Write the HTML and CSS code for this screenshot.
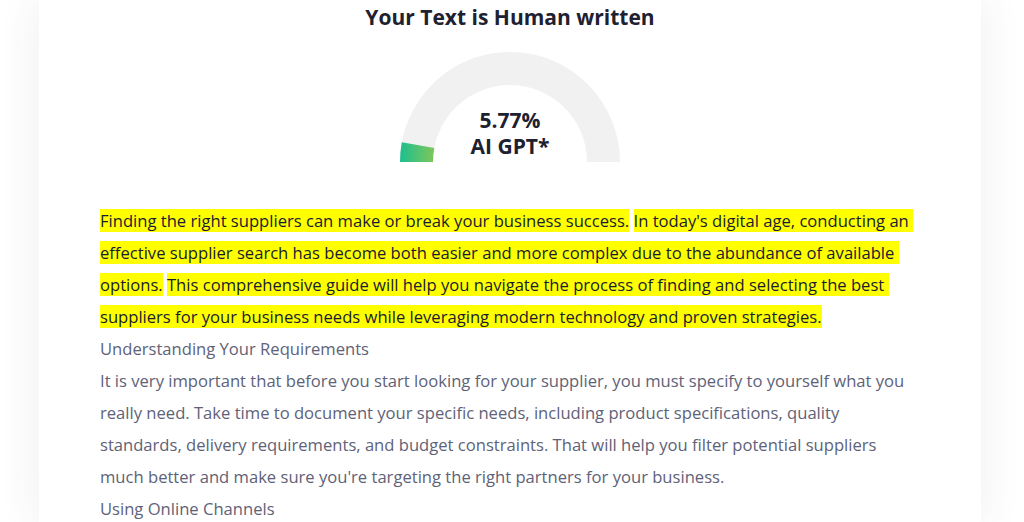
FILE: index.html
```html
<!DOCTYPE html>
<html lang="en">
<head>
    <meta charset="UTF-8">
    <title>AI Detector Result</title>
    <link rel="stylesheet" href="styles.css">
</head>
<body>
    <div class="page">
        <div class="card">
            <h2 class="result-title">Your Text is Human written</h2>

            <div class="gauge">
                <svg width="222" height="112" viewBox="0 0 222 112">
                    <defs>
                        <linearGradient id="gaugeFill" x1="0" y1="0" x2="1" y2="0">
                            <stop offset="0" stop-color="#1dbf8e"/>
                            <stop offset="1" stop-color="#7fc65a"/>
                        </linearGradient>
                    </defs>
                    <path d="M 1 111 A 110 110 0 0 1 221 111 L 188 111 A 77 77 0 0 0 34 111 Z" fill="#f1f1f2"/>
                    <path d="M 1 111 A 110 110 0 0 1 2.8 91.2 L 35.3 97.1 A 77 77 0 0 0 34 111 Z" fill="url(#gaugeFill)"/>
                </svg>
                <div class="gauge-label">
                    <div>5.77%</div>
                    <div>AI GPT*</div>
                </div>
            </div>

            <div class="result-text">
                <p class="marked"><span class="hl">Finding the right suppliers can make or break your business success.</span> <span class="hl">In today's digital age, conducting an effective supplier search has become both easier and more complex due to the abundance of available options.</span> <span class="hl">This comprehensive guide will help you navigate the process of finding and selecting the best suppliers for your business needs while leveraging modern technology and proven strategies.</span></p>
                <p class="plain">Understanding Your Requirements</p>
                <p class="plain">It is very important that before you start looking for your supplier, you must specify to yourself what you really need. Take time to document your specific needs, including product specifications, quality standards, delivery requirements, and budget constraints. That will help you filter potential suppliers much better and make sure you're targeting the right partners for your business.</p>
                <p class="plain">Using Online Channels</p>
            </div>
        </div>
    </div>
</body>
</html>
```

FILE: styles.css
```css
body {
    margin: 0;
    background: #ffffff;
    font-family: "Open Sans", "Noto Sans", sans-serif;
    overflow: hidden;
}

.page {
    padding: 0 43px 0 39px;
    height: 522px;
}

.card {
    background: #ffffff;
    height: 100%;
    padding: 0 61px;
    box-shadow: 0 0 40px rgba(82, 63, 105, 0.09);
}

.result-title {
    margin: 0;
    text-align: center;
    font-size: 21px;
    line-height: 34px;
    font-weight: 700;
    color: #1e2130;
}

.gauge {
    position: relative;
    width: 222px;
    height: 112px;
    margin: 17px auto 0;
}

    .gauge svg {
        display: block;
    }

.gauge-label {
    position: absolute;
    left: 0;
    right: 0;
    top: 56px;
    text-align: center;
    font-size: 21px;
    font-weight: 700;
    line-height: 26px;
    color: #1e2130;
}

.result-text {
    margin-top: 42px;
    font-size: 16.6px;
    line-height: 32px;
}

    .result-text p {
        margin: 0;
        color: #181c32;
    }

    .result-text .marked {
        white-space: pre-wrap;
    }

    .result-text .plain {
        color: #5e6278;
    }

.hl {
    background: #ffff00;
}
```
